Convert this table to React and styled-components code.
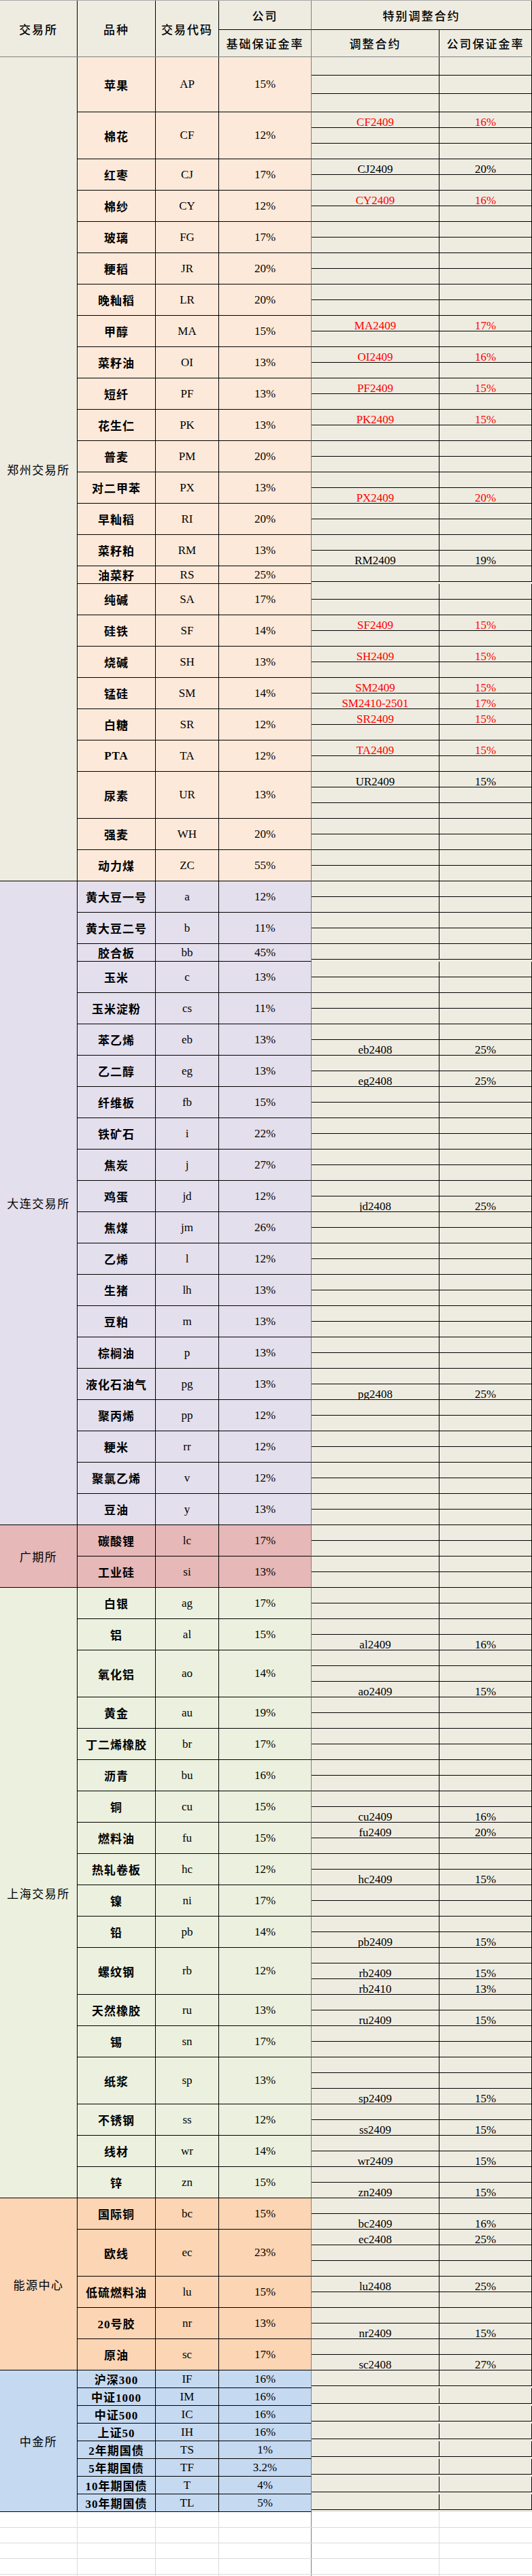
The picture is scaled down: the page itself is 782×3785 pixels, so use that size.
import React from "react";
import styled, { createGlobalStyle } from "styled-components";

const LINE = "#000";
const FREEZE = "#808080";
const GRID = "#dadada";
const SHEET = "#eeece1";
const COLS = "114px 115px 93px 136px 188px 136px";
const SERIF = `"Liberation Serif", "Noto Sans CJK SC", serif`;
const CJK = `"Noto Sans CJK SC", sans-serif`;

const GlobalStyle = createGlobalStyle`
  *, *::before, *::after { box-sizing: border-box; }
  html, body { margin: 0; padding: 0; background: #fff; }
  body { font-family: ${CJK}; color: #000; }
`;

const Sheet = styled.div`
  width: 782px;
  height: 3785px;
  overflow: hidden;
  display: flex;
  flex-direction: column;
`;

/* header */
const HeaderGrid = styled.div`
  display: grid;
  grid-template-columns: ${COLS};
  grid-template-rows: 43px 39px;
  background: ${SHEET};
  border-top: 1px solid #a6a6a6;
  border-bottom: 1px solid ${FREEZE};
`;

const HeadCell = styled.div`
  grid-row: ${({ $row }) => $row};
  grid-column: ${({ $col }) => $col};
  display: flex;
  align-items: center;
  justify-content: center;
  border-right: 1px solid ${({ $freeze }) => ($freeze ? FREEZE : LINE)};
  border-bottom: ${({ $rule }) => ($rule ? `1px solid ${LINE}` : "none")};
  font-family: ${CJK};
  font-size: 17px;
  font-weight: 500;
  letter-spacing: 2px;
  white-space: nowrap;
`;

/* body */
const Block = styled.div`
  display: flex;
  flex: none;
`;

const Label = styled.div`
  width: 114px;
  flex: none;
  display: flex;
  align-items: center;
  justify-content: center;
  background: ${({ $bg }) => $bg};
  border-right: 1px solid ${LINE};
  border-bottom: 1px solid ${LINE};
  font-family: ${CJK};
  font-size: 17px;
  letter-spacing: 1.5px;
  white-space: nowrap;
`;

const Products = styled.div`
  display: flex;
  flex-direction: column;
  width: 668px;
`;

const ProductRow = styled.div`
  display: flex;
`;

const Cell = styled.div`
  width: ${({ $w }) => $w}px;
  flex: none;
  display: flex;
  align-items: center;
  justify-content: center;
  background: ${({ $bg }) => $bg};
  border-right: 1px solid ${({ $freeze }) => ($freeze ? FREEZE : LINE)};
  border-bottom: 1px solid ${LINE};
  font-family: ${SERIF};
  font-size: 17px;
  white-space: nowrap;
`;

const NameCell = styled(Cell)`
  font-weight: 700;
  letter-spacing: 1px;
`;

const SubList = styled.div`
  width: 324px;
  display: flex;
  flex-direction: column;
  background: ${SHEET};
`;

const SubRow = styled.div`
  display: flex;
  height: ${({ $h }) => $h}px;
  border-bottom: 1px solid ${LINE};
`;

const SubCell = styled.div`
  width: ${({ $w }) => $w}px;
  flex: none;
  display: flex;
  align-items: flex-end;
  justify-content: center;
  border-right: 1px solid ${LINE};
  color: ${({ $red }) => ($red ? "#ff0000" : "#000")};
  font-family: ${SERIF};
  font-size: 17px;
  line-height: 15px;
  white-space: nowrap;
`;

/* empty sheet area */
const EmptyRow = styled.div`
  display: grid;
  grid-template-columns: ${COLS};
  height: ${({ $h }) => $h}px;
  flex: none;
  border-bottom: ${({ $open }) => ($open ? "none" : `1px solid ${GRID}`)};
`;

const GridCell = styled.div`
  border-right: ${({ $edge }) =>
    $edge === "freeze" ? `1px solid ${FREEZE}` : $edge === "none" ? "none" : `1px solid ${GRID}`};
`;

const TabBar = styled.div`
  display: flex;
  height: 2px;
  flex: none;
  background: #c8c8c8;
  padding-left: 35px;
`;

const ActiveTab = styled.div`
  width: 70px;
  background: #fff;
`;

const R = (c, v) => ({ c, v, red: true });
const K = (c, v) => ({ c, v, red: false });
const p = (name, code, rate, n = 2, marks = {}, h = 23) => ({
  name,
  code,
  rate,
  h,
  subs: Array.from({ length: n }, (_, i) => marks[i] || null),
});

const exchanges = [
  {
    label: "郑州交易所",
    labelBg: SHEET,
    bg: "#fde9d9",
    products: [
      p("苹果", "AP", "15%", 3, {}, 27),
      p("棉花", "CF", "12%", 3, { 0: R("CF2409", "16%") }),
      p("红枣", "CJ", "17%", 2, { 0: K("CJ2409", "20%") }),
      p("棉纱", "CY", "12%", 2, { 0: R("CY2409", "16%") }),
      p("玻璃", "FG", "17%"),
      p("粳稻", "JR", "20%"),
      p("晚籼稻", "LR", "20%"),
      p("甲醇", "MA", "15%", 2, { 0: R("MA2409", "17%") }),
      p("菜籽油", "OI", "13%", 2, { 0: R("OI2409", "16%") }),
      p("短纤", "PF", "13%", 2, { 0: R("PF2409", "15%") }),
      p("花生仁", "PK", "13%", 2, { 0: R("PK2409", "15%") }),
      p("普麦", "PM", "20%"),
      p("对二甲苯", "PX", "13%", 2, { 1: R("PX2409", "20%") }),
      p("早籼稻", "RI", "20%"),
      p("菜籽粕", "RM", "13%", 2, { 1: K("RM2409", "19%") }),
      p("油菜籽", "RS", "25%", 1),
      p("纯碱", "SA", "17%"),
      p("硅铁", "SF", "14%", 2, { 0: R("SF2409", "15%") }),
      p("烧碱", "SH", "13%", 2, { 0: R("SH2409", "15%") }),
      p("锰硅", "SM", "14%", 2, { 0: R("SM2409", "15%"), 1: R("SM2410-2501", "17%") }),
      p("白糖", "SR", "12%", 2, { 0: R("SR2409", "15%") }),
      p("PTA", "TA", "12%", 2, { 0: R("TA2409", "15%") }),
      p("尿素", "UR", "13%", 3, { 0: K("UR2409", "15%") }),
      p("强麦", "WH", "20%"),
      p("动力煤", "ZC", "55%"),
    ],
  },
  {
    label: "大连交易所",
    labelBg: "#e4dfec",
    bg: "#e4dfec",
    products: [
      p("黄大豆一号", "a", "12%"),
      p("黄大豆二号", "b", "11%"),
      p("胶合板", "bb", "45%", 1),
      p("玉米", "c", "13%"),
      p("玉米淀粉", "cs", "11%"),
      p("苯乙烯", "eb", "13%", 2, { 1: K("eb2408", "25%") }),
      p("乙二醇", "eg", "13%", 2, { 1: K("eg2408", "25%") }),
      p("纤维板", "fb", "15%"),
      p("铁矿石", "i", "22%"),
      p("焦炭", "j", "27%"),
      p("鸡蛋", "jd", "12%", 2, { 1: K("jd2408", "25%") }),
      p("焦煤", "jm", "26%"),
      p("乙烯", "l", "12%"),
      p("生猪", "lh", "13%"),
      p("豆粕", "m", "13%"),
      p("棕榈油", "p", "13%"),
      p("液化石油气", "pg", "13%", 2, { 1: K("pg2408", "25%") }),
      p("聚丙烯", "pp", "12%"),
      p("粳米", "rr", "12%"),
      p("聚氯乙烯", "v", "12%"),
      p("豆油", "y", "13%"),
    ],
  },
  {
    label: "广期所",
    labelBg: "#e6b8b7",
    bg: "#e6b8b7",
    products: [p("碳酸锂", "lc", "17%"), p("工业硅", "si", "13%")],
  },
  {
    label: "上海交易所",
    labelBg: "#ebf1de",
    bg: "#ebf1de",
    products: [
      p("白银", "ag", "17%"),
      p("铝", "al", "15%", 2, { 1: K("al2409", "16%") }),
      p("氧化铝", "ao", "14%", 3, { 2: K("ao2409", "15%") }),
      p("黄金", "au", "19%"),
      p("丁二烯橡胶", "br", "17%"),
      p("沥青", "bu", "16%"),
      p("铜", "cu", "15%", 2, { 1: K("cu2409", "16%") }),
      p("燃料油", "fu", "15%", 2, { 0: K("fu2409", "20%") }),
      p("热轧卷板", "hc", "12%", 2, { 1: K("hc2409", "15%") }),
      p("镍", "ni", "17%"),
      p("铅", "pb", "14%", 2, { 1: K("pb2409", "15%") }),
      p("螺纹钢", "rb", "12%", 3, { 1: K("rb2409", "15%"), 2: K("rb2410", "13%") }),
      p("天然橡胶", "ru", "13%", 2, { 1: K("ru2409", "15%") }),
      p("锡", "sn", "17%"),
      p("纸浆", "sp", "13%", 3, { 2: K("sp2409", "15%") }),
      p("不锈钢", "ss", "12%", 2, { 1: K("ss2409", "15%") }),
      p("线材", "wr", "14%", 2, { 1: K("wr2409", "15%") }),
      p("锌", "zn", "15%", 2, { 1: K("zn2409", "15%") }),
    ],
  },
  {
    label: "能源中心",
    labelBg: "#fcd5b4",
    bg: "#fcd5b4",
    products: [
      p("国际铜", "bc", "15%", 2, { 1: K("bc2409", "16%") }),
      p("欧线", "ec", "23%", 3, { 0: K("ec2408", "25%") }),
      p("低硫燃料油", "lu", "15%", 2, { 0: K("lu2408", "25%") }),
      p("20号胶", "nr", "13%", 2, { 1: K("nr2409", "15%") }),
      p("原油", "sc", "17%", 2, { 1: K("sc2408", "27%") }),
    ],
  },
  {
    label: "中金所",
    labelBg: "#c5d9f1",
    bg: "#c5d9f1",
    products: [
      p("沪深300", "IF", "16%", 1),
      p("中证1000", "IM", "16%", 1),
      p("中证500", "IC", "16%", 1),
      p("上证50", "IH", "16%", 1),
      p("2年期国债", "TS", "1%", 1),
      p("5年期国债", "TF", "3.2%", 1),
      p("10年期国债", "T", "4%", 1),
      p("30年期国债", "TL", "5%", 1),
    ],
  },
];

const Header = () => (
  <HeaderGrid>
    <HeadCell $row="1 / 3" $col="1">交易所</HeadCell>
    <HeadCell $row="1 / 3" $col="2">品种</HeadCell>
    <HeadCell $row="1 / 3" $col="3">交易代码</HeadCell>
    <HeadCell $row="1" $col="4" $freeze $rule>公司</HeadCell>
    <HeadCell $row="1" $col="5 / 7" $rule>特别调整合约</HeadCell>
    <HeadCell $row="2" $col="4" $freeze>基础保证金率</HeadCell>
    <HeadCell $row="2" $col="5">调整合约</HeadCell>
    <HeadCell $row="2" $col="6">公司保证金率</HeadCell>
  </HeaderGrid>
);

const Product = ({ item, bg }) => (
  <ProductRow>
    <NameCell $w={115} $bg={bg}>{item.name}</NameCell>
    <Cell $w={93} $bg={bg}>{item.code}</Cell>
    <Cell $w={136} $bg={bg} $freeze>{item.rate}</Cell>
    <SubList>
      {item.subs.map((s, i) => (
        <SubRow key={i} $h={item.h}>
          <SubCell $w={188} $red={s?.red}>{s?.c}</SubCell>
          <SubCell $w={136} $red={s?.red}>{s?.v}</SubCell>
        </SubRow>
      ))}
    </SubList>
  </ProductRow>
);

const Empty = ({ h, open }) => (
  <EmptyRow $h={h} $open={open}>
    <GridCell />
    <GridCell />
    <GridCell />
    <GridCell $edge="freeze" />
    <GridCell />
    <GridCell $edge="none" />
  </EmptyRow>
);

export default function App() {
  return (
    <>
      <GlobalStyle />
      <Sheet>
        <Header />
        {exchanges.map((ex) => (
          <Block key={ex.label}>
            <Label $bg={ex.labelBg}>{ex.label}</Label>
            <Products>
              {ex.products.map((item) => (
                <Product key={item.code} item={item} bg={ex.bg} />
              ))}
            </Products>
          </Block>
        ))}
        {[0, 1, 2, 3, 4].map((i) => (
          <Empty key={i} h={23} />
        ))}
        <Empty h={9} open />
        <TabBar>
          <ActiveTab />
        </TabBar>
      </Sheet>
    </>
  );
}
